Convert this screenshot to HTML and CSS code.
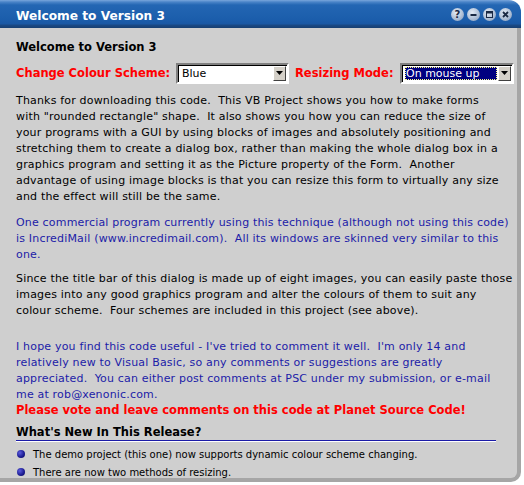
FILE: index.html
```html
<!DOCTYPE html>
<html>
<head>
<meta charset="utf-8">
<link rel="stylesheet" href="styles.css">
</head>
<body>
<div class="window">
  <div class="titlebar">
    <span class="title">Welcome to Version 3</span>
    <div class="tbuttons">
      <span class="tbtn">?</span>
      <span class="tbtn"><svg width="13" height="13" viewBox="0 0 13 13"><rect x="3.5" y="6" width="6" height="2" fill="#1b2a44"/></svg></span>
      <span class="tbtn"><svg width="13" height="13" viewBox="0 0 13 13"><rect x="3.5" y="3.5" width="6" height="6" fill="none" stroke="#1b2a44" stroke-width="1"/><rect x="3.5" y="3.5" width="6" height="2" fill="#1b2a44"/></svg></span>
      <span class="tbtn"><svg width="13" height="13" viewBox="0 0 13 13"><path d="M4 4 L9 9 M9 4 L4 9" stroke="#1b2a44" stroke-width="1.8"/></svg></span>
    </div>
  </div>
  <div class="content">
    <div class="heading">Welcome to Version 3</div>
    <div class="options">
      <span class="label">Change Colour Scheme:</span>
      <div class="combo">
        <span class="combo-text">Blue</span>
        <span class="combo-btn"><svg width="7" height="4" viewBox="0 0 7 4"><path d="M0 0 H7 L3.5 4 Z" fill="#000"/></svg></span>
      </div>
      <span class="label label2">Resizing Mode:</span>
      <div class="combo combo2">
        <span class="combo-text selected">On mouse up</span>
        <span class="combo-btn"><svg width="7" height="4" viewBox="0 0 7 4"><path d="M0 0 H7 L3.5 4 Z" fill="#000"/></svg></span>
      </div>
    </div>
    <p class="para black p1">Thanks for downloading this code.&nbsp; This VB Project shows you how to make forms<br>with "rounded rectangle" shape.&nbsp; It also shows you how you can reduce the size of<br>your programs with a GUI by using blocks of images and absolutely positioning and<br>stretching them to create a dialog box, rather than making the whole dialog box in a<br>graphics program and setting it as the Picture property of the Form.&nbsp; Another<br>advantage of using image blocks is that you can resize this form to virtually any size<br>and the effect will still be the same.</p>
    <p class="para blue p2">One commercial program currently using this technique (although not using this code)<br>is IncrediMail (www.incredimail.com).&nbsp; All its windows are skinned very similar to this<br>one.</p>
    <p class="para black p3">Since the title bar of this dialog is made up of eight images, you can easily paste those<br>images into any good graphics program and alter the colours of them to suit any<br>colour scheme.&nbsp; Four schemes are included in this project (see above).</p>
    <p class="para blue p4">I hope you find this code useful - I've tried to comment it well.&nbsp; I'm only 14 and<br>relatively new to Visual Basic, so any comments or suggestions are greatly<br>appreciated.&nbsp; You can either post comments at PSC under my submission, or e-mail<br>me at rob@xenonic.com.</p>
    <div class="vote">Please vote and leave comments on this code at Planet Source Code!</div>
    <div class="whatsnew">What's New In This Release?</div>
    <ul class="bullets">
      <li><span class="dot"></span>The demo project (this one) now supports dynamic colour scheme changing.</li>
      <li><span class="dot"></span>There are now two methods of resizing.</li>
    </ul>
  </div>
</div>
</body>
</html>
```
FILE: styles.css
```css
html, body {
  margin: 0;
  padding: 0;
  background: #ffffff;
}
.window {
  width: 521px;
  height: 482px;
  display: flex;
  flex-direction: column;
  font-family: "DejaVu Sans", Verdana, sans-serif;
}
.titlebar {
  height: 28px;
  flex: none;
  box-sizing: border-box;
  border-top-right-radius: 12px;
  background: linear-gradient(to bottom, #79a6dc 0px, #4a84c8 2px, #2366b3 5px, #1b5dab 20px, #1a58a4 24px, #1a4a86 25px, #173f72 28px);
  display: flex;
  align-items: center;
  justify-content: space-between;
  padding: 0 9px 0 16px;
}
.title {
  color: #ffffff;
  font-weight: bold;
  font-size: 12.2px;
  padding-top: 3px;
}
.tbuttons {
  display: flex;
  gap: 3px;
  padding-top: 1px;
}
.tbtn {
  width: 13px;
  height: 13px;
  border-radius: 50%;
  background: radial-gradient(circle at 40% 35%, #e4ecf6 0%, #aebfd6 55%, #7f95b4 100%);
  color: #1b2a44;
  font-size: 10px;
  font-weight: bold;
  line-height: 13px;
  display: flex;
  align-items: center;
  justify-content: center;
}
.content {
  flex: 1;
  background: #cfcfcf;
  border-right: 4px solid #a6a6a6;
  border-bottom: 4px solid #a6a6a6;
  border-bottom-right-radius: 10px;
  padding: 12px 0 0 16px;
  overflow: hidden;
}
.heading {
  font-weight: bold;
  font-size: 11.5px;
  color: #000;
  height: 18px;
}
.options {
  display: flex;
  align-items: center;
  height: 24px;
  margin-top: 3px;
  white-space: nowrap;
}
.label {
  color: #ff0000;
  font-weight: bold;
  font-size: 11.5px;
  width: 160px;
}
.label2 {
  width: 105px;
  margin-left: 6px;
}
.combo {
  width: 113px;
  height: 21px;
  box-sizing: border-box;
  background: #fff;
  border: 2px solid;
  border-color: #808080 #ffffff #ffffff #808080;
  box-shadow: inset 1px 1px 0 #000;
  display: flex;
  align-items: stretch;
  padding: 2px 2px 2px 3px;
}
.combo2 {
  width: 114px;
}
.combo-text {
  flex: 1;
  font-size: 11px;
  line-height: 13px;
  color: #000;
  padding-left: 1px;
}
.combo-text.selected {
  background: #000080;
  color: #fff;
  outline: 1px dotted #ffff80;
  outline-offset: -1px;
  margin-right: 1px;
}
.combo-btn {
  width: 13px;
  background: #d4d0c8;
  border: 1px solid;
  border-color: #ffffff #404040 #404040 #ffffff;
  box-sizing: border-box;
  display: flex;
  align-items: center;
  justify-content: center;
  margin: -1px -1px -1px 0;
}
.para {
  font-size: 11px;
  letter-spacing: 0.18px;
  line-height: 16px;
  margin: 0;
  white-space: nowrap;
}
.p1 { margin-top: 8px; margin-bottom: 10px; }
.p2 { margin-bottom: 8px; }
.p3 { margin-bottom: 20px; }
.p4 { margin-bottom: 0; }
.black { color: #000; }
.blue { color: #1c1ca8; }
.vote {
  color: #ff0000;
  font-weight: bold;
  font-size: 11.5px;
  line-height: 15px;
  height: 15px;
}
.whatsnew {
  font-weight: bold;
  font-size: 11.5px;
  width: 480px;
  border-bottom: 1px solid #1c1ca8;
  box-shadow: 0 1px 0 #ffffff;
  margin-top: 7px;
  padding-bottom: 1px;
}
.bullets {
  list-style: none;
  margin: 4px 0 0 0;
  padding: 0;
}
.bullets li {
  display: flex;
  align-items: center;
  font-size: 10px;
  height: 18px;
}
.dot {
  width: 8px;
  height: 8px;
  border-radius: 50%;
  background: radial-gradient(circle at 35% 35%, #5a5adc 0%, #1a1a90 60%, #0a0a50 100%);
  margin: 0 8px 0 1px;
}
```
